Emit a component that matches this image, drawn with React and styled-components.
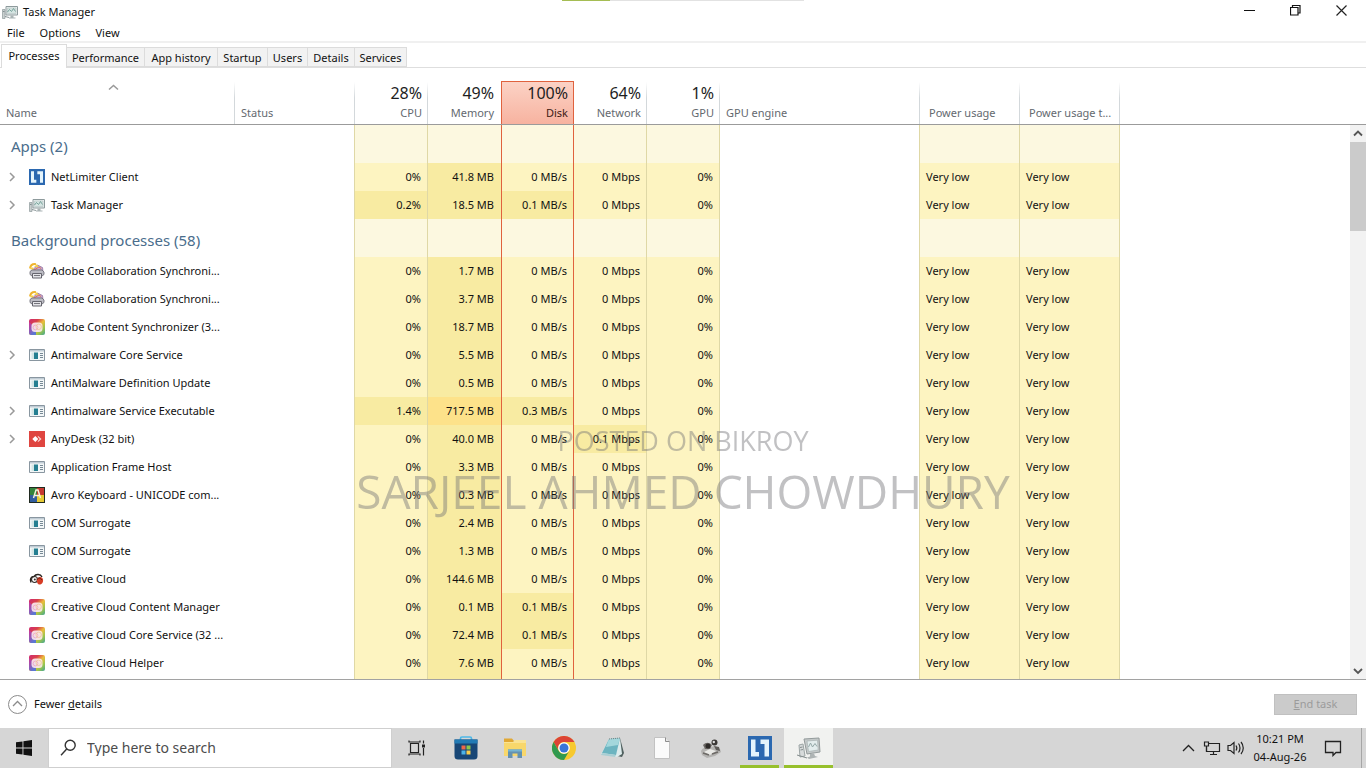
import React from "react";
import styled, { createGlobalStyle, css } from "styled-components";

const GlobalStyle = createGlobalStyle`
  *, *::before, *::after { box-sizing: border-box; }
  html, body, #root { height: 100%; }
  body {
    margin: 0;
    overflow: hidden;
    background: #fff;
    color: #111;
    font: 11px/16px "Noto Sans", "Open Sans", sans-serif;
  }
  button, input { font: inherit; color: inherit; }
  button { border: 0; padding: 0; background: none; }
  svg { display: block; flex: none; }
`;

const Screen = styled.div`
  height: 100vh;
  display: flex;
  flex-direction: column;
`;

/* ---------- Title bar, menu, tabs ---------- */

const TitleBar = styled.header`
  position: relative;
  display: flex;
  align-items: center;
  height: 24px;
  padding: 0 2px;
`;

const Title = styled.h1`
  flex: 1;
  margin: 0 0 0 5px;
  font-size: 11px;
  font-weight: 400;
`;

const ProgressEdge = styled.div`
  position: absolute;
  top: 0;
  left: 50%;
  width: 242px;
  height: 1px;
  transform: translateX(-50%);
  background: linear-gradient(to right, #a5bd54 20%, #e2e2e2 20%);
`;

const WindowButton = styled.button`
  display: grid;
  place-items: center;
  width: 46px;
  height: 20px;
  align-self: flex-start;
`;

const MenuBar = styled.nav`
  display: flex;
  gap: 15px;
  height: 19px;
  padding: 0 7px;
  border-bottom: 2px solid #f0f0f0;
`;

const TabList = styled.div`
  display: flex;
  align-items: flex-end;
  height: 25px;
  padding-left: 1px;
  border-bottom: 1px solid #dedede;
`;

const Tab = styled.button`
  height: 20px;
  padding: 1px 0 0;
  white-space: nowrap;
  background: #f2f2f2;
  border: 1px solid #dcdcdc;
  border-left-width: 0;
  width: ${(p) => p.$width}px;
  ${(p) =>
    p.$active &&
    css`
      height: 24px;
      padding-bottom: 2px;
      margin-bottom: -1px;
      background: #fff;
      border-left-width: 1px;
      border-bottom: 0;
    `}
`;

/* ---------- Process table ---------- */

const Main = styled.main`
  position: relative;
  flex: 1;
  min-height: 0;
  display: flex;
  overflow: hidden;
  border-bottom: 1px solid #a2a2a2;
`;

const Table = styled.table`
  flex: 1;
  align-self: flex-start;
  min-width: 0;
  table-layout: fixed;
  border-collapse: separate;
  border-spacing: 0;
`;

const HEADER_HEIGHT = 57;
const HOT_LINE = "#e0623e";

const HeadCell = styled.th`
  height: ${HEADER_HEIGHT}px;
  padding: 0 6px 3px;
  vertical-align: bottom;
  font-weight: 400;
  color: #64696f;
  white-space: nowrap;
  text-align: ${(p) => (p.$right ? "right" : "left")};
  border-bottom: 1px solid #9b9b9b;
  ${(p) => p.$inset && "padding-left: 9px;"}
  ${(p) => p.$wide && "padding-right: 7px;"}
  ${(p) =>
    p.$line &&
    css`
      background: linear-gradient(to bottom, transparent 14px, #d3d8db 30px) right / 1px 100% no-repeat border-box;
    `}
  ${(p) =>
    p.$hot &&
    css`
      color: #3c1a14;
      background:
        linear-gradient(${HOT_LINE}, ${HOT_LINE}) left 13px / 1px 44px no-repeat border-box,
        linear-gradient(${HOT_LINE}, ${HOT_LINE}) right 13px / 1px 44px no-repeat border-box,
        linear-gradient(${HOT_LINE}, ${HOT_LINE}) left 13px / 100% 1px no-repeat border-box,
        linear-gradient(#fcd3c6, #f7b29f) left 13px / 100% 44px no-repeat border-box;
    `}
`;

const SortMark = styled.span`
  display: flex;
  justify-content: center;
  height: 21px;
  margin-left: -8px;
`;

const Total = styled.span`
  display: block;
  font-size: 16px;
  line-height: 24px;
  color: #1e1e1e;
`;

const HEAT = {
  none: "transparent",
  faint: "#fcf8e0",
  low: "#fdf4c1",
  mid: "#f8eba2",
  high: "#fde28a",
};

const Cell = styled.td`
  height: 28px;
  padding: 0 6px;
  white-space: nowrap;
  text-align: ${(p) => (p.$right ? "right" : "left")};
  background: ${(p) => HEAT[p.$heat || "none"]};
  ${(p) => p.$wide && "padding-right: 7px;"}
  ${(p) => p.$line && "border-right: 1px solid #dfd8a6;"}
  ${(p) => p.$hot && `border-left: 1px solid ${HOT_LINE}; border-right: 1px solid ${HOT_LINE};`}
  ${(p) => p.$group && "height: 38px;"}
`;

const GroupName = styled.th`
  height: 38px;
  padding: 4px 0 0 11px;
  font-size: 15px;
  line-height: 20px;
  font-weight: 400;
  text-align: left;
  white-space: nowrap;
  color: #4a6d8c;
`;

const NameCell = styled.th`
  height: 28px;
  padding: 0;
  font-weight: 400;
  text-align: left;
`;

const NameLine = styled.div`
  display: flex;
  align-items: center;
  gap: 6px;
  padding-left: 8px;
  white-space: nowrap;
`;

const Expander = styled.button`
  display: grid;
  place-items: center start;
  width: 15px;
  height: 16px;
`;

const ScrollBar = styled.div`
  display: flex;
  flex-direction: column;
  width: 16px;
  background: #f2f2f2;
`;

const ScrollHead = styled.div`
  height: ${HEADER_HEIGHT}px;
  background: #fff;
  border-bottom: 1px solid #9b9b9b;
`;

const ScrollButton = styled.button`
  display: grid;
  place-items: center;
  height: 17px;
  ${(p) => p.$end && "margin-top: auto;"}
`;

const ScrollThumb = styled.div`
  height: 89px;
  background: #cbcbcb;
`;

/* ---------- Footer ---------- */

const Footer = styled.footer`
  display: flex;
  align-items: center;
  justify-content: space-between;
  height: 48px;
  padding: 0 9px 0 8px;
`;

const FewerButton = styled.button`
  display: flex;
  align-items: center;
  gap: 7px;
`;

const EndButton = styled.button`
  width: 83px;
  height: 21px;
  background: #cbcbcb;
  border: 1px solid #c0c0c0;
  color: #9b9b9b;
`;

/* ---------- Taskbar ---------- */

const Taskbar = styled.div`
  display: flex;
  height: 40px;
  background: #d6d6d6;
`;

const TaskButton = styled.button`
  display: grid;
  place-items: center;
  width: 49px;
  height: 40px;
  ${(p) =>
    p.$running &&
    css`
      background: linear-gradient(#97c02c, #97c02c) center bottom / ${p.$active ? "100%" : "39px"} 3px no-repeat
        ${p.$active ? "#f1f2f0" : "transparent"};
    `}
`;

const StartButton = styled(TaskButton)`
  width: 48px;
`;

const SearchBox = styled.label`
  display: flex;
  align-items: center;
  gap: 11px;
  width: 344px;
  padding-left: 11px;
  background: #fff;
  border: 1px solid #cfcfcf;
`;

const SearchInput = styled.input`
  flex: 1;
  min-width: 0;
  padding: 0;
  border: 0;
  outline: 0;
  background: transparent;
  font-size: 14px;
  &::placeholder { color: #4c4c4c; opacity: 1; }
`;

const Tray = styled.div`
  display: flex;
  align-items: center;
  margin-left: auto;
`;

const TrayButton = styled.button`
  display: grid;
  place-items: center;
  width: 24px;
  height: 40px;
`;

const Clock = styled.button`
  width: 64px;
  line-height: 18px;
  text-align: center;
`;

const NoticeButton = styled.button`
  display: grid;
  place-items: center;
  width: 42px;
  height: 40px;
`;

const ShowDesktop = styled.button`
  width: 5px;
  height: 40px;
  margin-left: 7px;
  border-left: 1px solid #a6a6a6;
`;

/* ---------- Watermark ---------- */

const Watermark = styled.div`
  position: fixed;
  inset: 0;
  display: flex;
  flex-direction: column;
  align-items: center;
  justify-content: center;
  padding-top: 178px;
  pointer-events: none;
  white-space: nowrap;
  color: rgba(112, 112, 116, 0.43);
`;

const WatermarkLine = styled.span`
  font-family: "Open Sans", sans-serif;
  font-size: ${(p) => p.$size}px;
  line-height: ${(p) => p.$line}px;
`;

/* ---------- Icons ---------- */

const MonitorIcon = ({ size = 16 }) => (
  <svg width={size} height={size} viewBox="0 0 16 16" fill="none">
    <path d="M4 2.5h11.5v8.5H4z" fill="#e8eeee" stroke="#8d9a9c" />
    <path d="M5.500 4h8.500v5.500H5.500z" fill="#d5e5e2" stroke="#b5c3c3" strokeWidth=".6" />
    <path d="M5.500 8l2-2.500 2 2 2-3 2 3" stroke="#6e9b94" strokeWidth=".9" />
    <path d="M8.500 11.500h3v2h2v1H7v-1h1.500z" fill="#aab4b5" />
    <path d="M.5 5.500h2.500v9H.5z" fill="#c9cfcf" stroke="#8e999b" strokeWidth=".7" />
    <path d="M1 7.500h1.500M3 12.500l4 1" stroke="#707d80" strokeWidth=".8" />
  </svg>
);

const TaskMonitorIcon = () => (
  <svg width="26" height="24" viewBox="0 0 26 24" fill="none">
    <path d="M8 3l15-1 1 14-13 2z" fill="#c4c9c9" stroke="#939b9b" />
    <path d="M11 5l10.500-.8.7 9.800-9.700 1.500z" fill="#e3eded" stroke="#a9b3b3" strokeWidth=".7" />
    <path d="M12.500 11l2-4 2 4 2.500-3.500 2 3" stroke="#93a8a7" />
    <path d="M14 18l4-.5 1 2.500 3 1-9 2-2-1.500 3-1z" fill="#aeb4b4" />
    <path d="M3 9l4-1 2 12-5 1z" fill="#d7dbdb" stroke="#9ca5a5" />
    <path d="M4 11.500l2.500-.5M4.500 14l2.500-.5M1 19l10 3" stroke="#858e8e" />
  </svg>
);

const NetLimiterIcon = ({ size = 16 }) => (
  <svg width={size} height={size} viewBox="0 0 24 24">
    <path d="M0 0h24v24H0z" fill="#2b68b0" />
    <path d="M3 3.500h4.500V16H11v4.500H3z" fill="#e4f4fc" />
    <path d="M12.500 3.500H21v17h-4.500V8h-4z" fill="#e4f4fc" />
  </svg>
);

const PrinterSyncIcon = () => (
  <svg width="16" height="16" viewBox="0 0 16 16" fill="none">
    <path d="M3 7.500 8.500 2l5 2.500.5 4-4 1z" fill="#c9a6cf" stroke="#8c6c98" strokeWidth=".7" />
    <path d="M1 5.500C1.500 2 4 .8 7 1.200" stroke="#efb52f" strokeWidth="2" />
    <path d="m5 4 3-3 1.500 3zM1.500 4.500h3v2h-3z" fill="#f3cf4b" />
    <path d="m5 7 5-3 2 1.500" stroke="#df7952" />
    <path d="M1 8.500 3 7h10l2 2v2.500l-2 1.500H3l-2-1.500z" fill="#bcbcc4" stroke="#65656e" strokeWidth=".8" />
    <path d="M3.500 10.500h9v4.500h-9z" fill="#e4e4e8" stroke="#66666e" />
    <path d="M5 12.500h6" stroke="#77777e" />
  </svg>
);

const CloudTileIcon = () => (
  <svg width="16" height="16" viewBox="0 0 16 16">
    <defs>
      <linearGradient id="cloudTop" x1="0" y1="0" x2="1" y2="1">
        <stop offset="0" stopColor="#cf2a72" />
        <stop offset=".3" stopColor="#d9404b" />
        <stop offset=".52" stopColor="#ecbc3c" />
        <stop offset=".75" stopColor="#9cc64c" />
        <stop offset="1" stopColor="#42a394" />
      </linearGradient>
      <linearGradient id="cloudSide" x1="0" y1=".2" x2=".5" y2="1">
        <stop offset="0" stopColor="#c03c9c" />
        <stop offset="1" stopColor="#5b78d2" />
      </linearGradient>
    </defs>
    <rect width="16" height="16" rx="2" fill="url(#cloudTop)" />
    <path d="M0 3l7 6v7H2a2 2 0 0 1-2-2z" fill="url(#cloudSide)" />
    <rect x="2.500" y="3.500" width="11" height="9.500" rx="3.500" fill="#fbe9ee" opacity=".9" />
    <circle cx="6.500" cy="8.500" r="2.400" fill="none" stroke="#eda3c4" strokeWidth=".8" />
    <circle cx="9.700" cy="7.800" r="2.700" fill="none" stroke="#edc398" strokeWidth=".8" />
  </svg>
);

const ServiceIcon = () => (
  <svg width="16" height="16" viewBox="0 0 16 16">
    <path d="M.5 2.500h15v11H.5z" fill="#f3f7f8" stroke="#8996a0" />
    <path d="M1 3h14v1.500H1z" fill="#c0ccd5" />
    <path d="M2.500 5.500h3v6.500h-3z" fill="#d4e6e6" />
    <path d="M5 5.500h4v6.500H5z" fill="#257f91" />
    <path d="M11 6.500h3M11 8.500h3M11 10.500h3" stroke="#778995" />
  </svg>
);

const AnyDeskIcon = () => (
  <svg width="16" height="16" viewBox="0 0 16 16">
    <path d="M0 0h16v16H0z" fill="#df4540" />
    <path d="m6.300 5 3 3-3 3-3-3z" fill="#fff" />
    <path d="m9.300 5 3.200 3-3.200 3-.8-.8L10.700 8 8.500 5.800z" fill="#f9d2d0" />
  </svg>
);

const AvroIcon = () => (
  <svg width="16" height="16" viewBox="0 0 16 16">
    <path d="M0 0h16v16H0z" fill="#202a20" />
    <path d="M1 1h7v7H1z" fill="#34843c" />
    <path d="M8 1h7v7H8z" fill="#c73931" />
    <path d="M1 8h7v7H1z" fill="#315d9e" />
    <path d="M8 8h7v7H8z" fill="#e6ca35" />
    <path d="m4.500 11 2.500-8h2l2.500 8M6 8.500h4" fill="none" stroke="#f8f6dc" strokeWidth="1.400" />
  </svg>
);

const CreativeCloudIcon = () => (
  <svg width="16" height="16" viewBox="0 0 16 16" fill="none">
    <path d="M2 11.500C.5 8.500 2 5.500 5 5.500c2-3 6.500-2.500 8 .5" stroke="#29231f" strokeWidth="1.400" />
    <circle cx="5.500" cy="8.500" r="3" stroke="#352f2b" strokeWidth="1.200" />
    <circle cx="5.800" cy="8.600" r="1" fill="#352f2b" />
    <path d="M8 8c2-3 5.500-2.500 6 .5.500 3-1.500 5-3.500 5S7.500 11 8 8z" fill="#d63c25" />
    <path d="M8 9c1-2.500 3-2.500 5 0" stroke="#5a241b" />
  </svg>
);

const StartIcon = () => (
  <svg width="16" height="16" viewBox="0 0 16 16" fill="#111">
    <path d="M0 2.300 6.500 1.400v6.200H0zM7.400 1.300 16 0v7.600H7.400zM0 8.400h6.500v6.200L0 13.700zM7.400 8.400H16V16l-8.600-1.300z" />
  </svg>
);

const SearchIcon = () => (
  <svg width="16" height="18" viewBox="0 0 16 18" fill="none" stroke="#333" strokeWidth="1.400">
    <circle cx="10.200" cy="6.200" r="5" />
    <path d="M6.700 10 1 16.200" />
  </svg>
);

const TaskViewIcon = () => (
  <svg width="18" height="16" viewBox="0 0 18 16" fill="none" stroke="#222" strokeWidth="1.200">
    <path d="M2.500 3.500h8v9h-8zM1 .500v1.500h11V.500M1 15.500V14h11v1.500M15.500.5v3M15.500 8v7.500" />
    <path d="M14 4.500h3v3h-3z" fill="#222" stroke="none" />
  </svg>
);

const StoreIcon = () => (
  <svg width="24" height="24" viewBox="0 0 24 24">
    <path d="M6.500 5V2.500C6.500 1.500 7.200 1 8 1h8c1 0 1.500.6 1.500 1.500V5" fill="none" stroke="#4db8e8" strokeWidth="1.700" />
    <path d="M.5 3.500h23V20a3.500 3.500 0 0 1-3.500 3.500H4A3.500 3.500 0 0 1 .5 20z" fill="#174676" />
    <path d="M.5 3.500h23v4H.5z" fill="#217ab4" />
    <path d="M7.500 9.500h4v4h-4z" fill="#ed6748" />
    <path d="M12.500 9.500h4v4h-4z" fill="#8fc64a" />
    <path d="M7.500 14.500h4v4h-4z" fill="#4bb2e7" />
    <path d="M12.500 14.500h4v4h-4z" fill="#f8ce4c" />
  </svg>
);

const FolderIcon = () => (
  <svg width="24" height="22" viewBox="0 0 24 22">
    <path d="M1 1.500h8l2 2.500h11v14H1z" fill="#e1a834" />
    <path d="M1 5h22v14H1z" fill="#f8d76b" />
    <path d="M1 5h9l2-2h11v3H1z" fill="#fae394" />
    <path d="M5 12.500h14V21h-4.500v-4.500h-5V21H5z" fill="#6592b0" />
    <path d="M5 12.500h14v2H5z" fill="#75b5d4" />
  </svg>
);

const ChromeIcon = () => (
  <svg width="24" height="24" viewBox="0 0 24 24">
    <circle cx="12" cy="12" r="12" fill="#f7c92f" />
    <path d="M1.600 6A12 12 0 0 1 22.400 6H12a6 6 0 0 0-5.200 9z" fill="#dc4436" />
    <path d="M1.600 6A12 12 0 0 0 12 24l5.200-9A6 6 0 0 1 6.800 15z" fill="#31994f" />
    <circle cx="12" cy="12" r="5.800" fill="#fff" />
    <circle cx="12" cy="12" r="4.500" fill="#3975d7" />
  </svg>
);

const NotepadIcon = () => (
  <svg width="26" height="24" viewBox="0 0 26 24">
    <path d="m20 2 4 15-2 4-5-1z" fill="#50605f" />
    <path d="M9 3 20 2l2 16-5 3L1 18z" fill="#dcebec" />
    <path d="M9 3 20 2l-4 17L2 17z" fill="#6cb4c0" />
    <path d="M9 3 20 2l-2 7L6 11z" fill="#a3d7dc" />
    <path d="m2 17 14 2-1 2-14-2z" fill="#a9ced3" />
    <path d="M9 3 20 2" stroke="#727f80" strokeDasharray="1 1" />
  </svg>
);

const DocumentIcon = () => (
  <svg width="16" height="22" viewBox="0 0 16 22">
    <path d="M.5.500h11l4 4v17H.5z" fill="#fbfbfb" stroke="#c2c2c2" />
    <path d="M11.500.500v4h4" fill="#e7e7e7" stroke="#8d8d8d" />
  </svg>
);

const GadgetIcon = () => (
  <svg width="22" height="20" viewBox="0 0 22 20">
    <path d="M1 13c1-3 4-4 8-3l5-2 6 3 1 3-6 4-8 2-5-3z" fill="#b3b2b0" />
    <path d="m4 14 6-3 6 2-6 4z" fill="#e9e9e6" />
    <path d="M3 7c3-3 6-3 9 0l-2 4H5z" fill="#6b6865" />
    <circle cx="8" cy="8" r="2.500" fill="#2e2b29" />
    <circle cx="14.500" cy="4.500" r="3" fill="#3a3735" />
    <circle cx="13.800" cy="4" r="1.200" fill="#ddd" />
    <path d="m14 8 5 1 1 4-4-1z" fill="#5d5a57" />
    <path d="m3 15 6 2M12 16l6-2" stroke="#6d6a67" strokeWidth="1.500" />
  </svg>
);

const Arrow = ({ d, width = 10, height = 10, color = "#555", weight = 1.500 }) => (
  <svg width={width} height={height} viewBox={`0 0 ${width} ${height}`} fill="none" stroke={color} strokeWidth={weight}>
    <path d={d} />
  </svg>
);

const NetworkIcon = () => (
  <svg width="18" height="16" viewBox="0 0 18 16" fill="none" stroke="#222" strokeWidth="1.200">
    <path d="M6 3.500h10.500v8H3.500V7M7 14.500h7M10.500 11.500v3" />
    <path d="M1.500 2h4v4h-4zM3.500 6v5.500" />
  </svg>
);

const VolumeIcon = () => (
  <svg width="18" height="16" viewBox="0 0 18 16" fill="none" stroke="#222" strokeWidth="1.200">
    <path d="M1 5.500h2.500L7 2.500v11l-3.500-3H1zM9 5.500c1 1.500 1 3.500 0 5M11.500 3.500c2 2.500 2 6.500 0 9M14 2c3 3.500 3 8.500 0 12" />
  </svg>
);

const NoticeIcon = () => (
  <svg width="18" height="18" viewBox="0 0 18 18" fill="none" stroke="#222" strokeWidth="1.300">
    <path d="M1.500 2.500h15v11H12l-3 3v-3H1.500z" />
  </svg>
);

/* ---------- Data ---------- */

const tabs = [
  ["Processes", 66],
  ["Performance", 78],
  ["App history", 73],
  ["Startup", 50],
  ["Users", 40],
  ["Details", 47],
  ["Services", 52],
];

const columns = [
  { name: "Name", width: 235, line: true },
  { name: "Status", width: 120, line: true },
  { name: "CPU", width: 73, total: "28%", right: true, line: true },
  { name: "Memory", width: 73, total: "49%", right: true, wide: true },
  { name: "Disk", width: 73, total: "100%", right: true, hot: true },
  { name: "Network", width: 73, total: "64%", right: true, line: true },
  { name: "GPU", width: 73, total: "1%", right: true, line: true },
  { name: "GPU engine", width: 200, line: true },
  { name: "Power usage", width: 100, line: true, inset: true },
  { name: "Power usage t...", width: 100, line: true, inset: true },
];

const groups = [
  {
    name: "Apps (2)",
    rows: [
      { name: "NetLimiter Client", icon: NetLimiterIcon, open: true, cpu: "0%", mem: "41.8 MB", disk: "0 MB/s" },
      { name: "Task Manager", icon: MonitorIcon, open: true, cpu: "0.2%", mem: "18.5 MB", disk: "0.1 MB/s" },
    ],
  },
  {
    name: "Background processes (58)",
    rows: [
      { name: "Adobe Collaboration Synchroni...", icon: PrinterSyncIcon, cpu: "0%", mem: "1.7 MB", disk: "0 MB/s" },
      { name: "Adobe Collaboration Synchroni...", icon: PrinterSyncIcon, cpu: "0%", mem: "3.7 MB", disk: "0 MB/s" },
      { name: "Adobe Content Synchronizer (3...", icon: CloudTileIcon, cpu: "0%", mem: "18.7 MB", disk: "0 MB/s" },
      { name: "Antimalware Core Service", icon: ServiceIcon, open: true, cpu: "0%", mem: "5.5 MB", disk: "0 MB/s" },
      { name: "AntiMalware Definition Update", icon: ServiceIcon, cpu: "0%", mem: "0.5 MB", disk: "0 MB/s" },
      { name: "Antimalware Service Executable", icon: ServiceIcon, open: true, cpu: "1.4%", mem: "717.5 MB", disk: "0.3 MB/s", memHeat: "high" },
      { name: "AnyDesk (32 bit)", icon: AnyDeskIcon, open: true, cpu: "0%", mem: "40.0 MB", disk: "0 MB/s", net: "0.1 Mbps" },
      { name: "Application Frame Host", icon: ServiceIcon, cpu: "0%", mem: "3.3 MB", disk: "0 MB/s" },
      { name: "Avro Keyboard - UNICODE com...", icon: AvroIcon, cpu: "0%", mem: "0.3 MB", disk: "0 MB/s" },
      { name: "COM Surrogate", icon: ServiceIcon, cpu: "0%", mem: "2.4 MB", disk: "0 MB/s" },
      { name: "COM Surrogate", icon: ServiceIcon, cpu: "0%", mem: "1.3 MB", disk: "0 MB/s" },
      { name: "Creative Cloud", icon: CreativeCloudIcon, cpu: "0%", mem: "144.6 MB", disk: "0 MB/s" },
      { name: "Creative Cloud Content Manager", icon: CloudTileIcon, cpu: "0%", mem: "0.1 MB", disk: "0.1 MB/s" },
      { name: "Creative Cloud Core Service (32 ...", icon: CloudTileIcon, cpu: "0%", mem: "72.4 MB", disk: "0.1 MB/s" },
      { name: "Creative Cloud Helper", icon: CloudTileIcon, cpu: "0%", mem: "7.6 MB", disk: "0 MB/s" },
    ],
  },
];

const heatOf = (value) => (/^0\D*$/.test(value) ? "low" : "mid");

const UsageCells = ({ cpu, mem, disk, net, gpu, power, heats, group }) => (
  <>
    <Cell $line $group={group} />
    <Cell $right $line $heat={heats[0]} $group={group}>{cpu}</Cell>
    <Cell $right $wide $heat={heats[1]} $group={group}>{mem}</Cell>
    <Cell $right $hot $heat={heats[2]} $group={group}>{disk}</Cell>
    <Cell $right $line $heat={heats[3]} $group={group}>{net}</Cell>
    <Cell $right $line $heat={heats[4]} $group={group}>{gpu}</Cell>
    <Cell $line $group={group} />
    <Cell $line $heat={heats[4]} $group={group}>{power}</Cell>
    <Cell $line $heat={heats[4]} $group={group}>{power}</Cell>
    <Cell $group={group} />
  </>
);

const ProcessRow = ({ row }) => {
  const Icon = row.icon;
  const net = row.net || "0 Mbps";
  return (
    <tr>
      <NameCell scope="row">
        <NameLine>
          <Expander aria-label={row.open ? `Expand ${row.name}` : undefined} as={row.open ? "button" : "span"}>
            {row.open && <Arrow d="M2 1l4 4-4 4" color="#999" />}
          </Expander>
          <Icon />
          {row.name}
        </NameLine>
      </NameCell>
      <UsageCells
        cpu={row.cpu}
        mem={row.mem}
        disk={row.disk}
        net={net}
        gpu="0%"
        power="Very low"
        heats={[heatOf(row.cpu), row.memHeat || "mid", heatOf(row.disk), heatOf(net), "low"]}
      />
    </tr>
  );
};

const faintHeats = ["faint", "faint", "faint", "faint", "faint"];
const lowHeats = ["low", "mid", "low", "low", "low"];

export default function App() {
  return (
    <Screen>
      <GlobalStyle />
      <TitleBar>
        <MonitorIcon />
        <Title>Task Manager</Title>
        <ProgressEdge />
        <WindowButton aria-label="Minimize">
          <Arrow d="M0 5.500h11" width={11} height={11} color="#111" weight={1} />
        </WindowButton>
        <WindowButton aria-label="Restore">
          <Arrow d="M.5 2.500h7.500V10H.5zM2.500 2.500v-2H10V8H8" width={11} height={11} color="#111" weight={1.200} />
        </WindowButton>
        <WindowButton aria-label="Close">
          <Arrow d="M.5.500l10 10M10.500.500l-10 10" width={11} height={11} color="#222" weight={1.200} />
        </WindowButton>
      </TitleBar>
      <MenuBar aria-label="Menu">
        <button>File</button>
        <button>Options</button>
        <button>View</button>
      </MenuBar>
      <TabList role="tablist">
        {tabs.map(([name, width], i) => (
          <Tab key={name} role="tab" aria-selected={i === 0} $active={i === 0} $width={width}>
            {name}
          </Tab>
        ))}
      </TabList>

      <Main>
        <Table>
          <colgroup>
            {columns.map((c) => (
              <col key={c.name} width={c.width} />
            ))}
            <col />
          </colgroup>
          <thead>
            <tr>
              {columns.map((c) => (
                <HeadCell
                  key={c.name}
                  scope="col"
                  $right={c.right}
                  $hot={c.hot}
                  $line={c.line}
                  $inset={c.inset}
                  $wide={c.wide}
                >
                  {c.name === "Name" && (
                    <SortMark>
                      <Arrow d="M1 5.500 5.500 1.500 10 5.500" width={11} height={7} color="#999" />
                    </SortMark>
                  )}
                  {c.total && <Total>{c.total}</Total>}
                  {c.name}
                </HeadCell>
              ))}
              <HeadCell as="td" />
            </tr>
          </thead>
          <tbody>
            {groups.map((g) => (
              <React.Fragment key={g.name}>
                <tr>
                  <GroupName scope="rowgroup">{g.name}</GroupName>
                  <UsageCells heats={faintHeats} group />
                </tr>
                {g.rows.map((row, i) => (
                  <ProcessRow key={i} row={row} />
                ))}
              </React.Fragment>
            ))}
            <tr aria-hidden="true">
              <NameCell as="td" />
              <UsageCells heats={lowHeats} />
            </tr>
          </tbody>
        </Table>
        <ScrollBar>
          <ScrollHead />
          <ScrollButton aria-label="Scroll up">
            <Arrow d="M1 6.500l4-4 4 4" weight={1.800} />
          </ScrollButton>
          <ScrollThumb />
          <ScrollButton aria-label="Scroll down" $end>
            <Arrow d="M1 3l4 4 4-4" weight={1.800} />
          </ScrollButton>
        </ScrollBar>
      </Main>

      <Footer>
        <FewerButton>
          <svg width="19" height="19" viewBox="0 0 19 19" fill="none" stroke="#8b8b8b">
            <circle cx="9.500" cy="9.500" r="9" />
            <path d="m5 11 4.500-4.500L14 11" strokeWidth="1.300" />
          </svg>
          <span>Fewer <u>d</u>etails</span>
        </FewerButton>
        <EndButton disabled><u>E</u>nd task</EndButton>
      </Footer>

      <Taskbar>
        <StartButton aria-label="Start"><StartIcon /></StartButton>
        <SearchBox>
          <SearchIcon />
          <SearchInput type="text" aria-label="Search" placeholder="Type here to search" />
        </SearchBox>
        <TaskButton aria-label="Task view"><TaskViewIcon /></TaskButton>
        <TaskButton aria-label="Store"><StoreIcon /></TaskButton>
        <TaskButton aria-label="File Explorer"><FolderIcon /></TaskButton>
        <TaskButton aria-label="Chrome"><ChromeIcon /></TaskButton>
        <TaskButton aria-label="Notepad"><NotepadIcon /></TaskButton>
        <TaskButton aria-label="Document"><DocumentIcon /></TaskButton>
        <TaskButton aria-label="Gadget"><GadgetIcon /></TaskButton>
        <TaskButton aria-label="NetLimiter" $running><NetLimiterIcon size={24} /></TaskButton>
        <TaskButton aria-label="Task Manager" $running $active><TaskMonitorIcon /></TaskButton>
        <Tray>
          <TrayButton aria-label="Show hidden icons">
            <Arrow d="M1 8l5.500-5.500L12 8" width={13} height={10} color="#222" weight={1.300} />
          </TrayButton>
          <TrayButton aria-label="Network"><NetworkIcon /></TrayButton>
          <TrayButton aria-label="Volume"><VolumeIcon /></TrayButton>
          <Clock>10:21 PM<br />04-Aug-26</Clock>
          <NoticeButton aria-label="Notifications"><NoticeIcon /></NoticeButton>
          <ShowDesktop aria-label="Show desktop" />
        </Tray>
      </Taskbar>

      <Watermark>
        <WatermarkLine $size={27} $line={36}>POSTED ON BIKROY</WatermarkLine>
        <WatermarkLine $size={46} $line={64}>SARJEEL AHMED CHOWDHURY</WatermarkLine>
      </Watermark>
    </Screen>
  );
}
